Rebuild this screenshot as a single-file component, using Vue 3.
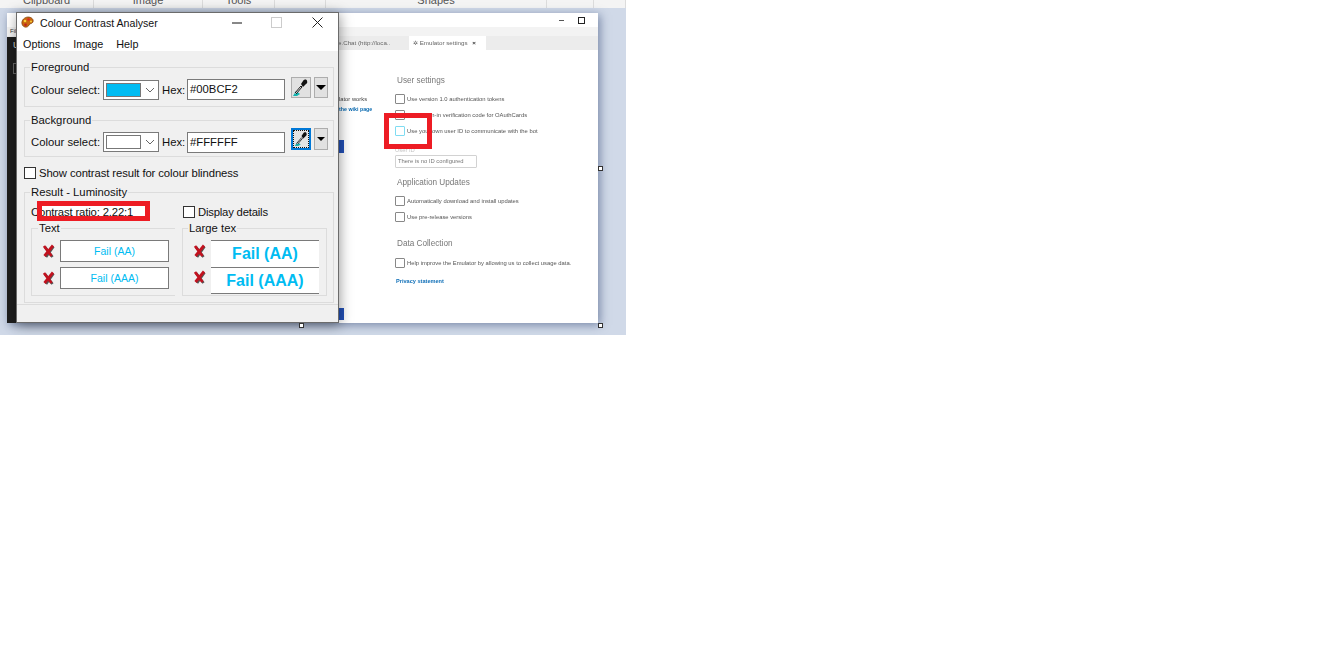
<script setup>
const ribbon = [
  { label: 'Clipboard', w: 94 },
  { label: 'Image', w: 109 },
  { label: 'Tools', w: 72 },
  { label: '', w: 51 },
  { label: 'Shapes', w: 221 },
  { label: '', w: 47 },
  { label: '', w: 32 },
]
const smallResults = ['Fail (AA)', 'Fail (AAA)']
</script>

<template>
  <main class="shot">
    <div class="ribbon">
      <div v-for="(seg, i) in ribbon" :key="i" class="seg" :style="{ width: seg.w + 'px' }">{{ seg.label }}</div>
    </div>

    <section class="emulator">
      <div class="em-title">
        <span class="em-min"></span>
        <span class="em-max"></span>
      </div>
      <div class="em-strip"><span class="em-file">File</span></div>
      <div class="em-tabs">
        <span class="em-tab">e.Chat (http://loca..</span>
        <span class="em-tab active"><i class="gear">✲</i> Emulator settings <b class="tab-x">×</b></span>
      </div>
      <div class="em-main">
        <div class="em-rail">
          <span class="rail-u">U</span>
          <span class="rail-box"></span>
        </div>
        <div class="em-center">
          <p class="em-works">lator works</p>
          <p class="em-wiki">the wiki page</p>
          <div class="em-bar first"></div>
          <div class="em-bar second"></div>
        </div>
        <div class="settings">
          <h3 class="set-h">User settings</h3>
          <label class="set-row first"><span class="box"></span>Use version 1.0 authentication tokens</label>
          <label class="set-row"><span class="box"></span>Use a sign-in verification code for OAuthCards</label>
          <label class="set-row"><span class="box focus"></span>Use your own user ID to communicate with the bot</label>
          <div class="set-id">User ID</div>
          <div class="set-input">There is no ID configured</div>
          <h3 class="set-h upd">Application Updates</h3>
          <label class="set-row first"><span class="box"></span>Automatically download and install updates</label>
          <label class="set-row"><span class="box"></span>Use pre-release versions</label>
          <h3 class="set-h data">Data Collection</h3>
          <label class="set-row help"><span class="box"></span>Help improve the Emulator by allowing us to collect usage data.</label>
          <a class="set-link">Privacy statement</a>
        </div>
      </div>
    </section>

    <section class="cca">
      <header class="cca-title">
        <svg class="app-icon" width="13" height="13" viewBox="0 0 13 13">
          <path d="M1 8C0 4 4 1 7 1c3 0 6 2 5 5-1 2-3 1-4 3-1 3-6 3-7-1z" fill="#c9660f" stroke="#7a3c08" stroke-width=".7" />
          <circle cx="4" cy="5" r="1.3" fill="#f7d038" />
          <circle cx="7.500" cy="3.500" r="1.200" fill="#e02525" />
          <circle cx="10" cy="5.500" r="1" fill="#f7d038" />
          <circle cx="4.500" cy="8.800" r="1.300" fill="#c11f1f" />
        </svg>
        <span class="cca-name">Colour Contrast Analyser</span>
        <svg class="win-min" width="10" height="2" viewBox="0 0 10 2"><path d="M0 1h10" stroke="#111" /></svg>
        <span class="win-max"></span>
        <svg class="win-close" width="11" height="11" viewBox="0 0 11 11"><path d="M.5.5l10 10M10.500.5l-10 10" stroke="#222" /></svg>
      </header>
      <nav class="cca-menu"><span>Options</span><span>Image</span><span>Help</span></nav>

      <div class="cca-body">
        <div class="group fg">
          <div class="legend">Foreground</div>
          <div class="controls">
            <span class="lbl">Colour select:</span>
            <div class="select">
              <span class="swatch blue"></span>
              <svg width="10" height="6" viewBox="0 0 10 6"><path d="M1 1l4 4 4-4" fill="none" stroke="#666" /></svg>
            </div>
            <span class="lbl hex">Hex:</span>
            <div class="hexbox">#00BCF2</div>
            <div class="btn pick">
              <svg width="18" height="19" viewBox="0 0 18 19">
                <path d="M1 18l3-5 4 3-3 2z" fill="#12b5b0" />
                <path d="M3 15l6-7 1 1-6 7" fill="#fff" stroke="#111" />
                <path d="M9 6l2-3c1-2 4-2 4 0 1 2-1 3-2 4l-2 2z" fill="#111" />
              </svg>
            </div>
            <div class="btn drop"><i class="tri"></i></div>
          </div>
        </div>

        <div class="group bg">
          <div class="legend">Background</div>
          <div class="controls">
            <span class="lbl">Colour select:</span>
            <div class="select">
              <span class="swatch white"></span>
              <svg width="10" height="6" viewBox="0 0 10 6"><path d="M1 1l4 4 4-4" fill="none" stroke="#666" /></svg>
            </div>
            <span class="lbl hex">Hex:</span>
            <div class="hexbox">#FFFFFF</div>
            <div class="btn pick active">
              <svg width="15" height="16" viewBox="0 0 18 19">
                <path d="M1 18l3-5 4 3-3 2z" fill="#12b5b0" />
                <path d="M3 15l6-7 1 1-6 7" fill="#fff" stroke="#111" />
                <path d="M9 6l2-3c1-2 4-2 4 0 1 2-1 3-2 4l-2 2z" fill="#111" />
              </svg>
            </div>
            <div class="btn drop tall"><i class="tri"></i></div>
          </div>
        </div>

        <label class="check-line"><span class="chk"></span>Show contrast result for colour blindness</label>

        <div class="group result">
          <div class="legend">Result - Luminosity</div>
          <div class="ratio-row">
            <span class="ratio">Contrast ratio: 2.22:1</span>
            <span class="chk"></span>
            <span class="details">Display details</span>
          </div>
          <div class="subgroups">
            <div class="sub text-sub">
              <div class="legend sub-legend">Text</div>
              <div class="small-rows">
                <div v-for="r in smallResults" :key="r" class="res-row small">
                  <svg class="cross" width="13" height="14" viewBox="0 0 13 14">
                    <path d="M3 3l7.500 10M11.500 2.500L4 13" fill="none" stroke="#555" stroke-width="2.600" />
                    <path d="M2 2l7.500 10M11 1.500L2.500 12" fill="none" stroke="#c1121f" stroke-width="2.800" />
                  </svg>
                  <div class="res-box">{{ r }}</div>
                </div>
              </div>
            </div>
            <div class="sub large-sub">
              <div class="legend sub-legend">Large tex</div>
              <div class="large-rows">
                <div v-for="r in smallResults" :key="r" class="res-row large">
                  <svg class="cross" width="13" height="14" viewBox="0 0 13 14">
                    <path d="M3 3l7.500 10M11.500 2.500L4 13" fill="none" stroke="#555" stroke-width="2.600" />
                    <path d="M2 2l7.500 10M11 1.500L2.500 12" fill="none" stroke="#c1121f" stroke-width="2.800" />
                  </svg>
                  <div class="res-big">{{ r }}</div>
                </div>
              </div>
            </div>
          </div>
        </div>
      </div>
      <footer class="cca-foot"></footer>
    </section>

    <div class="mark mark-ratio"></div>
    <div class="mark mark-check"></div>

    <span class="handle h-a"></span>
    <span class="handle h-b"></span>
    <span class="handle h-c"></span>
  </main>
</template>

<style>
html, body { background: #fff; }
</style>

<style scoped>
.shot {
  position: relative;
  width: 626px;
  height: 335px;
  overflow: hidden;
  background: #d0d9e8;
  font-family: "Liberation Sans", Arial, sans-serif;
  color: #111;
}
.ribbon { display: flex; height: 8px; background: #f4f4f4; overflow: hidden; }
.seg {
  flex: none;
  height: 8px;
  box-sizing: border-box;
  border-right: 1px solid #dcdcdc;
  text-align: center;
  font-size: 11px;
  line-height: 0;
  color: #555;
}

/* Background window */
.emulator {
  position: absolute;
  left: 7px;
  top: 13px;
  width: 591px;
  height: 310px;
  background: #fff;
  box-shadow: 2px 2px 9px rgba(70, 90, 130, .65);
  display: flex;
  flex-direction: column;
}
.em-title { height: 14px; display: flex; justify-content: flex-end; align-items: center; gap: 14px; padding-right: 13px; }
.em-min { width: 5px; height: 1px; background: #555; }
.em-max { width: 5px; height: 5px; border: 1px solid #222; }
.em-strip { height: 9px; background: #f3f3f3; }
.em-file { display: block; padding-left: 3px; font-size: 6px; line-height: 9px; color: #333; }
.em-tabs { height: 14px; background: #ececec; display: flex; justify-content: flex-start; padding-left: 331px; font-size: 6.200px; color: #666; filter: blur(.3px); }
.em-tab { width: 71px; line-height: 14px; white-space: nowrap; overflow: hidden; }
.em-tab.active { width: 77px; background: #fff; padding-left: 4px; box-sizing: border-box; }
.gear { font-style: normal; }
.tab-x { margin-left: 3px; color: #333; }
.em-main { flex: 1; display: flex; min-height: 0; }
.em-rail { width: 10px; margin-top: -13px; background: #1e1e1e; color: #ddd; display: flex; flex-direction: column; align-items: flex-end; position: relative; }
.rail-u { width: 4px; overflow: hidden; margin-top: 3px; font-size: 9px; line-height: 11px; }
.rail-box { width: 3px; height: 9px; margin-top: 12px; border: 1px solid #666; border-right: 0; }
.em-center { width: 378px; box-sizing: border-box; padding: 44px 0 0 322px; font-size: 5.800px; color: #444; filter: blur(.25px); }
.em-works { margin: 0; line-height: 10px; }
.em-wiki { margin: 0; line-height: 10px; color: #0a6ab0; font-weight: 700; font-size: 5.300px; white-space: nowrap; }
.em-bar { width: 6px; margin-left: -1px; background: #2351b8; }
.em-bar.first { height: 13px; margin-top: 26px; }
.em-bar.second { height: 12px; margin-top: 155px; }

.settings { flex: 1; padding-top: 24px; font-size: 5.850px; color: #555; filter: blur(.3px); }
.set-h { margin: 0 0 0 2px; font-weight: 400; font-size: 8.200px; line-height: 14px; color: #777; }
.set-row { display: flex; align-items: center; gap: 2px; height: 16px; white-space: nowrap; }
.set-row.first { margin-top: 3px; }
.set-row.help { margin-top: 4px; }
.box { flex: none; width: 8px; height: 8px; border: 1px solid #888; border-radius: 1px; background: #fff; }
.box.focus { border-color: #7fdcf2; }
.set-id { margin-top: 6px; line-height: 10px; color: #c4c4c4; }
.set-input { box-sizing: border-box; width: 82px; height: 13px; padding-left: 2px; border: 1px solid #d2d2d2; border-radius: 1px; line-height: 11px; color: #777; }
.set-h.upd { margin-top: 8px; }
.set-h.data { margin-top: 12px; }
.set-link { display: block; margin: 5px 0 0 1px; line-height: 10px; color: #1170b8; font-weight: 700; font-size: 5.600px; }

/* Foreground window */
.cca {
  position: absolute;
  left: 16px;
  top: 12px;
  width: 323px;
  height: 311px;
  box-sizing: border-box;
  border: 1px solid #6b6b6b;
  background: #f0f0f0;
  box-shadow: 1px 2px 12px rgba(0, 0, 0, .4);
  display: flex;
  flex-direction: column;
  font-size: 11.300px;
}
.cca-title { box-sizing: border-box; height: 23px; flex: none; background: #fff; display: flex; align-items: center; padding: 0 0 4px 4px; }
.app-icon { flex: none; }
.cca-name { margin-left: 6px; width: 192px; font-size: 10.600px; white-space: nowrap; }
.win-max { width: 9px; height: 9px; border: 1px solid #ccc; margin-left: 29px; }
.win-close { margin-left: 30px; }
.cca-menu { box-sizing: border-box; height: 15px; flex: none; background: #fff; display: flex; gap: 13px; padding: 1px 0 0 6px; font-size: 10.800px; line-height: 15px; }
.cca-body { flex: 1; padding: 16px 4px 0 7px; min-height: 0; }
.cca-foot { flex: none; height: 17px; border-top: 1px solid #dcdcdc; }

.group { box-sizing: border-box; border: 1px solid #dcdcdc; }
.legend { width: fit-content; margin: -7px 0 0 5px; padding: 0 1px; background: #f0f0f0; line-height: 12px; white-space: nowrap; }
.fg { height: 40px; }
.bg { height: 37px; margin-top: 13px; }
.controls { display: flex; align-items: flex-start; padding-left: 6px; margin-top: 7px; }
.bg .controls { margin-top: 6px; }
.lbl { width: 72px; flex: none; line-height: 20px; white-space: nowrap; }
.hex { width: 25px; margin-left: 3px; }
.select {
  box-sizing: border-box;
  width: 56px;
  height: 20px;
  border: 1px solid #7a7a7a;
  background: #fff;
  display: flex;
  align-items: center;
  gap: 4px;
  padding-left: 2px;
}
.swatch { box-sizing: border-box; width: 35px; height: 14px; border: 1px solid #777; }
.swatch.blue { background: #00bcf2; }
.swatch.white { background: #fff; }
.hexbox { box-sizing: border-box; width: 98px; height: 21px; border: 1px solid #7a7a7a; background: #fff; padding-left: 2px; line-height: 19px; }
.fg .hexbox { margin-top: -1px; }
.btn { flex: none; box-sizing: border-box; background: #e1e1e1; border: 1px solid #adadad; display: flex; align-items: center; justify-content: center; }
.pick { width: 20px; height: 21px; margin: -3px 0 0 6px; }
.bg .pick { margin-top: -4px; height: 22px; }
.pick.active {
  border: 2px solid #0078d7;
  background: #e4e4e4;
  outline: 1px dotted #111;
  outline-offset: -3px;
}
.drop { width: 14px; height: 21px; margin: -3px 0 0 3px; }
.drop.tall { height: 22px; margin-top: -4px; }
.tri { width: 0; height: 0; border-left: 5px solid transparent; border-right: 5px solid transparent; border-top: 5px solid #000; }
.tall .tri { border-left-width: 4px; border-right-width: 4px; border-top-width: 4px; }

.check-line { display: flex; align-items: center; height: 12px; margin-top: 10px; gap: 3px; white-space: nowrap; letter-spacing: -.1px; }
.chk { flex: none; box-sizing: border-box; width: 12px; height: 12px; background: #fff; border: 1px solid #333; }

.result { height: 111px; margin-top: 13px; }
.ratio-row { display: flex; align-items: center; height: 12px; margin-top: 8px; padding-left: 6px; }
.ratio { width: 152px; flex: none; white-space: nowrap; line-height: 12px; letter-spacing: -.15px; background: linear-gradient(90deg, transparent 11px, #fff 11px, #fff 114px, transparent 114px); }
.details { margin-left: 3px; white-space: nowrap; letter-spacing: -.2px; }
.subgroups { display: flex; gap: 7px; margin: 10px 0 0 6px; }
.sub { box-sizing: border-box; height: 68px; border: 1px solid #dcdcdc; }
.text-sub { width: 144px; border-right: 0; }
.large-sub { width: 145px; }
.sub-legend { margin-left: 6px; }
.large-sub .sub-legend { margin-left: 5px; }
.small-rows { margin-top: 6px; display: flex; flex-direction: column; gap: 5px; padding-left: 10px; }
.large-rows { margin-top: 6px; padding-left: 10px; }
.res-row { display: flex; gap: 5px; }
.res-row.small { align-items: center; }
.res-box { box-sizing: border-box; width: 109px; height: 22px; border: 1px solid #7a7a7a; background: #fff; color: #00bcf2; text-align: center; line-height: 20px; font-size: 10.500px; }
.res-row.large .cross { margin-top: 4px; }
.res-row.large:last-child .cross { margin-top: 3px; }
.res-big { box-sizing: border-box; width: 108px; height: 27px; border-top: 1px solid #7a7a7a; background: #fff; color: #00bcf2; text-align: center; font-weight: 700; font-size: 16px; line-height: 25px; }
.res-row.large:last-child .res-big { border-bottom: 1px solid #7a7a7a; }
.cross { flex: none; }

/* Annotations drawn over the screenshot */
.mark { position: absolute; box-sizing: border-box; border: 5px solid #ed1c24; }
.mark-ratio { left: 37px; top: 201px; width: 113px; height: 20px; }
.mark-check { left: 384px; top: 113px; width: 48px; height: 36px; }
.handle { position: absolute; box-sizing: border-box; width: 5px; height: 5px; background: #fff; border: 1px solid #333; }
.h-a { left: 299px; top: 323px; }
.h-b { left: 598px; top: 166px; }
.h-c { left: 598px; top: 323px; }
</style>
